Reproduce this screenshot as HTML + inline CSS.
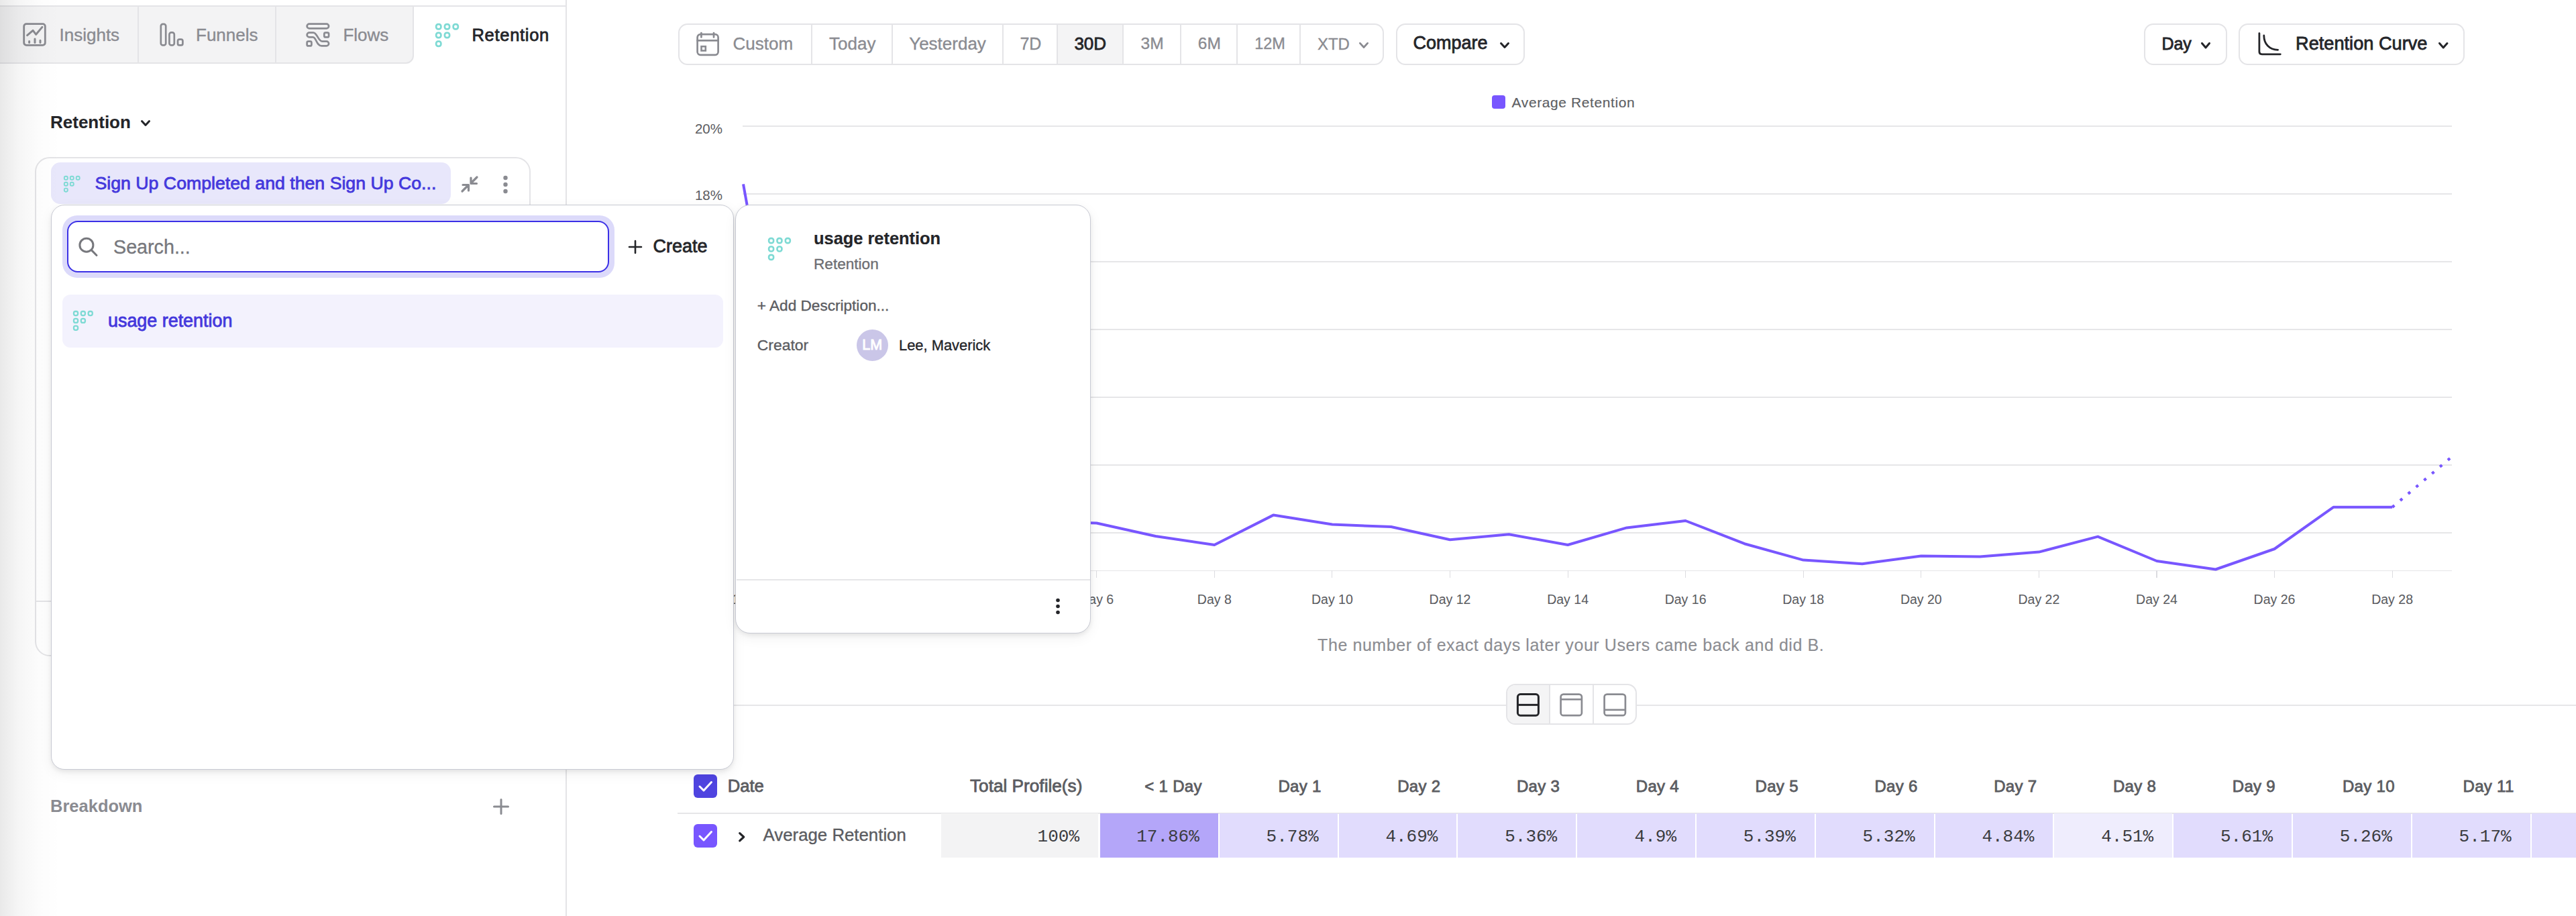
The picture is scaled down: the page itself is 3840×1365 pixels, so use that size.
<!DOCTYPE html>
<html><head><meta charset="utf-8"><style>
html,body{margin:0;padding:0;background:#fff;}
body{width:3840px;height:1365px;position:relative;overflow:hidden;font-family:"Liberation Sans",sans-serif;}
.t{position:absolute;white-space:nowrap;line-height:1;width:max-content;}
</style></head><body>
<div style="position:absolute;left:843.0px;top:0.0px;width:2.0px;height:1365.0px;background:#e4e4e7"></div>
<div style="position:absolute;left:0.0px;top:8.0px;width:843.0px;height:2.0px;background:#e4e4e7"></div>
<div style="position:absolute;left:-20.0px;top:8.0px;width:637.0px;height:87.0px;background:#f3f3f4;border:2px solid #e4e4e7;border-radius:0 0 12px 0;box-sizing:border-box"></div>
<div style="position:absolute;left:205.0px;top:10.0px;width:2.0px;height:84.0px;background:#e4e4e7"></div>
<div style="position:absolute;left:410.0px;top:10.0px;width:2.0px;height:84.0px;background:#e4e4e7"></div>
<svg style="position:absolute;left:34.0px;top:34.0px;overflow:visible" width="35" height="35" viewBox="0 0 35 35"><rect x="1.7" y="1.7" width="31.6" height="31.6" rx="3.5" fill="none" stroke="#8a8b91" stroke-width="2.8"/><path d="M6.6 18.6 L15.1 11.4 L19.7 17.3 L28.9 6.4" fill="none" stroke="#8a8b91" stroke-width="3" stroke-linecap="round" stroke-linejoin="round"/><path d="M9.6 27.5 V29.5 M18 24 V29.5 M26 26.3 V29.5" fill="none" stroke="#8a8b91" stroke-width="3" stroke-linecap="round"/></svg>
<div class="t" style="left:88.5px;top:39.0px;font-size:26.0px;color:#8a8b91;font-weight:400;font-family:'Liberation Sans', sans-serif;-webkit-text-stroke:0.35px #8a8b91;">Insights</div>
<svg style="position:absolute;left:238.0px;top:34.0px;overflow:visible" width="36" height="35" viewBox="0 0 36 35"><rect x="1.8" y="1.8" width="7.4" height="31.6" rx="3" fill="none" stroke="#8a8b91" stroke-width="2.7"/><rect x="14.4" y="14.4" width="7.4" height="19" rx="3" fill="none" stroke="#8a8b91" stroke-width="2.7"/><rect x="27" y="24.6" width="7.4" height="8.8" rx="2.5" fill="none" stroke="#8a8b91" stroke-width="2.7"/></svg>
<div class="t" style="left:292.0px;top:39.0px;font-size:26.0px;color:#8a8b91;font-weight:400;font-family:'Liberation Sans', sans-serif;-webkit-text-stroke:0.35px #8a8b91;">Funnels</div>
<svg style="position:absolute;left:456.0px;top:34.0px;overflow:visible" width="36" height="36" viewBox="0 0 36 36"><rect x="1.6" y="1.6" width="32.5" height="6.8" rx="3.4" fill="none" stroke="#8a8b91" stroke-width="2.7"/><rect x="27.3" y="14.6" width="6.8" height="6.8" rx="2" fill="none" stroke="#8a8b91" stroke-width="2.7"/><rect x="1.6" y="27.6" width="6.8" height="6.8" rx="2" fill="none" stroke="#8a8b91" stroke-width="2.7"/><path d="M5 14.6 H11 C17 14.6 18 27.6 24.5 27.6 H30.7 A3.4 3.4 0 0 1 30.7 34.4 H23.5 C15.5 34.4 15.5 21.4 10.5 21.4 H5 A3.4 3.4 0 0 1 5 14.6 Z" fill="none" stroke="#8a8b91" stroke-width="2.7" stroke-linejoin="round"/></svg>
<div class="t" style="left:511.4px;top:39.0px;font-size:26.0px;color:#8a8b91;font-weight:400;font-family:'Liberation Sans', sans-serif;-webkit-text-stroke:0.35px #8a8b91;">Flows</div>
<svg style="position:absolute;left:649.0px;top:35.0px;overflow:visible" width="35" height="35" viewBox="0 0 35 35"><rect x="1.15" y="1.15" width="7.2" height="7.2" rx="3" fill="none" stroke="#7edad4" stroke-width="2.7"/><rect x="13.90" y="1.15" width="7.2" height="7.2" rx="3" fill="none" stroke="#7edad4" stroke-width="2.7"/><rect x="26.65" y="1.15" width="7.2" height="7.2" rx="3" fill="none" stroke="#7edad4" stroke-width="2.7"/><rect x="1.15" y="13.90" width="7.2" height="7.2" rx="3" fill="none" stroke="#7edad4" stroke-width="2.7"/><rect x="13.90" y="13.90" width="7.2" height="7.2" rx="3" fill="none" stroke="#7edad4" stroke-width="2.7"/><rect x="1.15" y="26.65" width="7.2" height="7.2" rx="3" fill="none" stroke="#7edad4" stroke-width="2.7"/></svg>
<div class="t" style="left:703.5px;top:39.9px;font-size:25.5px;color:#242529;font-weight:400;font-family:'Liberation Sans', sans-serif;letter-spacing:0.7px;-webkit-text-stroke:0.80px #242529;">Retention</div>
<div class="t" style="left:75.0px;top:168.7px;font-size:26.0px;color:#242529;font-weight:700;font-family:'Liberation Sans', sans-serif;-webkit-text-stroke:0.10px #242529;">Retention</div>
<svg style="position:absolute;left:210.0px;top:179.0px;overflow:visible" width="14" height="9" viewBox="0 0 14 9"><path d="M1.5 1.5 L7.0 7.5 L12.5 1.5" fill="none" stroke="#242529" stroke-width="3" stroke-linecap="round" stroke-linejoin="round"/></svg>
<div style="position:absolute;left:52.0px;top:234.0px;width:739.0px;height:744.0px;border:2px solid #e4e4e7;border-radius:22px;box-sizing:border-box;background:#fff"></div>
<div style="position:absolute;left:54.0px;top:895.0px;width:735.0px;height:2.0px;background:#e4e4e7"></div>
<div style="position:absolute;left:76.0px;top:242.0px;width:596.0px;height:62.0px;background:#e8e7fb;border-radius:14px"></div>
<svg style="position:absolute;left:95.0px;top:262.0px;overflow:visible" width="24.5" height="24.5" viewBox="0 0 35 35"><rect x="1.15" y="1.15" width="7.2" height="7.2" rx="3" fill="none" stroke="#7edad4" stroke-width="2.7"/><rect x="13.90" y="1.15" width="7.2" height="7.2" rx="3" fill="none" stroke="#7edad4" stroke-width="2.7"/><rect x="26.65" y="1.15" width="7.2" height="7.2" rx="3" fill="none" stroke="#7edad4" stroke-width="2.7"/><rect x="1.15" y="13.90" width="7.2" height="7.2" rx="3" fill="none" stroke="#7edad4" stroke-width="2.7"/><rect x="13.90" y="13.90" width="7.2" height="7.2" rx="3" fill="none" stroke="#7edad4" stroke-width="2.7"/><rect x="1.15" y="26.65" width="7.2" height="7.2" rx="3" fill="none" stroke="#7edad4" stroke-width="2.7"/></svg>
<div class="t" style="left:141.5px;top:259.6px;font-size:26.7px;color:#4438dc;font-weight:400;font-family:'Liberation Sans', sans-serif;-webkit-text-stroke:0.80px #4438dc;">Sign Up Completed and then Sign Up Co...</div>
<svg style="position:absolute;left:686.0px;top:261.0px;overflow:visible" width="28" height="27" viewBox="0 0 28 27"><path d="M3 24 L11 16 M4 14.5 H12.5 V23 M25 3 L17 11 M16 4 V12.5 H24.5" fill="none" stroke="#8a8b91" stroke-width="3.2" stroke-linecap="round" stroke-linejoin="round"/></svg>
<svg style="position:absolute;left:749.0px;top:261.0px;overflow:visible" width="9" height="28" viewBox="0 0 9 28"><circle cx="4.5" cy="4" r="3.2" fill="#8a8b91"/><circle cx="4.5" cy="14" r="3.2" fill="#8a8b91"/><circle cx="4.5" cy="24" r="3.2" fill="#8a8b91"/></svg>
<div class="t" style="left:75.0px;top:1189.4px;font-size:25.5px;color:#8a8b91;font-weight:700;font-family:'Liberation Sans', sans-serif;">Breakdown</div>
<svg style="position:absolute;left:735.0px;top:1190.0px;overflow:visible" width="24" height="24" viewBox="0 0 24 24"><path d="M12 1.5 V22.5 M1.5 12 H22.5" stroke="#8a8b91" stroke-width="3" stroke-linecap="round"/></svg>
<div style="position:absolute;left:1011.0px;top:34.5px;width:1052.0px;height:62.0px;border:2px solid #e4e4e7;border-radius:14px;box-sizing:border-box;background:#fff;overflow:hidden"></div>
<div style="position:absolute;left:1576.0px;top:36.5px;width:98.0px;height:58.0px;background:#f4f4f5"></div>
<div style="position:absolute;left:1209.0px;top:34.5px;width:2.0px;height:62.0px;background:#e4e4e7"></div>
<div style="position:absolute;left:1329.0px;top:34.5px;width:2.0px;height:62.0px;background:#e4e4e7"></div>
<div style="position:absolute;left:1494.0px;top:34.5px;width:2.0px;height:62.0px;background:#e4e4e7"></div>
<div style="position:absolute;left:1575.0px;top:34.5px;width:2.0px;height:62.0px;background:#e4e4e7"></div>
<div style="position:absolute;left:1673.0px;top:34.5px;width:2.0px;height:62.0px;background:#e4e4e7"></div>
<div style="position:absolute;left:1759.0px;top:34.5px;width:2.0px;height:62.0px;background:#e4e4e7"></div>
<div style="position:absolute;left:1843.0px;top:34.5px;width:2.0px;height:62.0px;background:#e4e4e7"></div>
<div style="position:absolute;left:1937.0px;top:34.5px;width:2.0px;height:62.0px;background:#e4e4e7"></div>
<svg style="position:absolute;left:1037.0px;top:47.5px;overflow:visible" width="36" height="36" viewBox="0 0 36 36"><rect x="2.6" y="3.2" width="31" height="30.6" rx="4.5" fill="none" stroke="#8a8b91" stroke-width="2.7"/><path d="M2.6 12.4 H33.6 M8.4 1 V7.5 M27 1 V7.5" stroke="#8a8b91" stroke-width="2.7" stroke-linecap="round"/><rect x="8.5" y="21.2" width="6.3" height="6.3" fill="none" stroke="#8a8b91" stroke-width="2.6"/></svg>
<div class="t" style="left:1092.6px;top:52.0px;font-size:26.0px;color:#8a8b91;font-weight:400;font-family:'Liberation Sans', sans-serif;-webkit-text-stroke:0.35px #8a8b91;">Custom</div>
<div class="t" style="left:1236.0px;top:52.0px;font-size:26.0px;color:#8a8b91;font-weight:400;font-family:'Liberation Sans', sans-serif;-webkit-text-stroke:0.35px #8a8b91;">Today</div>
<div class="t" style="left:1355.2px;top:52.0px;font-size:26.0px;color:#8a8b91;font-weight:400;font-family:'Liberation Sans', sans-serif;-webkit-text-stroke:0.35px #8a8b91;">Yesterday</div>
<div class="t" style="left:1520.4px;top:52.8px;font-size:25.0px;color:#8a8b91;font-weight:400;font-family:'Liberation Sans', sans-serif;-webkit-text-stroke:0.35px #8a8b91;">7D</div>
<div class="t" style="left:1601.4px;top:52.0px;font-size:26.0px;color:#242529;font-weight:400;font-family:'Liberation Sans', sans-serif;-webkit-text-stroke:0.80px #242529;">30D</div>
<div class="t" style="left:1700.6px;top:53.3px;font-size:24.5px;color:#8a8b91;font-weight:400;font-family:'Liberation Sans', sans-serif;-webkit-text-stroke:0.35px #8a8b91;">3M</div>
<div class="t" style="left:1785.8px;top:53.3px;font-size:24.5px;color:#8a8b91;font-weight:400;font-family:'Liberation Sans', sans-serif;-webkit-text-stroke:0.35px #8a8b91;">6M</div>
<div class="t" style="left:1870.2px;top:54.1px;font-size:23.5px;color:#8a8b91;font-weight:400;font-family:'Liberation Sans', sans-serif;-webkit-text-stroke:0.35px #8a8b91;">12M</div>
<div class="t" style="left:1963.9px;top:53.7px;font-size:24.0px;color:#8a8b91;font-weight:400;font-family:'Liberation Sans', sans-serif;-webkit-text-stroke:0.35px #8a8b91;">XTD</div>
<svg style="position:absolute;left:2026.0px;top:62.5px;overflow:visible" width="14" height="9" viewBox="0 0 14 9"><path d="M1.4 1.4 L7.0 7.6 L12.6 1.4" fill="none" stroke="#8a8b91" stroke-width="2.8" stroke-linecap="round" stroke-linejoin="round"/></svg>
<div style="position:absolute;left:2081.0px;top:34.5px;width:192.0px;height:62.0px;border:2px solid #e4e4e7;border-radius:14px;box-sizing:border-box;background:#fff"></div>
<div class="t" style="left:2106.4px;top:51.1px;font-size:27.0px;color:#242529;font-weight:400;font-family:'Liberation Sans', sans-serif;-webkit-text-stroke:0.80px #242529;">Compare</div>
<svg style="position:absolute;left:2236.0px;top:62.5px;overflow:visible" width="14" height="9" viewBox="0 0 14 9"><path d="M1.5 1.5 L7.0 7.5 L12.5 1.5" fill="none" stroke="#242529" stroke-width="3" stroke-linecap="round" stroke-linejoin="round"/></svg>
<div style="position:absolute;left:3196.0px;top:34.5px;width:124.0px;height:62.0px;border:2px solid #e4e4e7;border-radius:14px;box-sizing:border-box;background:#fff"></div>
<div class="t" style="left:3222.4px;top:52.8px;font-size:25.0px;color:#242529;font-weight:400;font-family:'Liberation Sans', sans-serif;-webkit-text-stroke:0.80px #242529;">Day</div>
<svg style="position:absolute;left:3280.5px;top:62.5px;overflow:visible" width="14" height="9.5" viewBox="0 0 14 9.5"><path d="M1.5 1.5 L7.0 8.0 L12.5 1.5" fill="none" stroke="#242529" stroke-width="3" stroke-linecap="round" stroke-linejoin="round"/></svg>
<div style="position:absolute;left:3337.0px;top:34.5px;width:337.0px;height:62.0px;border:2px solid #e4e4e7;border-radius:14px;box-sizing:border-box;background:#fff"></div>
<svg style="position:absolute;left:3366.0px;top:48.0px;overflow:visible" width="35" height="35" viewBox="0 0 35 35"><path d="M1.9 1.6 V29 Q1.9 32.8 5.7 32.8 H33.3" fill="none" stroke="#242529" stroke-width="2.8" stroke-linecap="round"/><path d="M8.8 5 C8.8 17.5 17 26.2 29.6 26.3" fill="none" stroke="#242529" stroke-width="2.8" stroke-linecap="round"/></svg>
<div class="t" style="left:3422.0px;top:51.0px;font-size:27.2px;color:#242529;font-weight:400;font-family:'Liberation Sans', sans-serif;-webkit-text-stroke:0.80px #242529;">Retention Curve</div>
<svg style="position:absolute;left:3634.5px;top:62.5px;overflow:visible" width="14.5" height="9.5" viewBox="0 0 14.5 9.5"><path d="M1.5 1.5 L7.2 8.0 L13.0 1.5" fill="none" stroke="#242529" stroke-width="3" stroke-linecap="round" stroke-linejoin="round"/></svg>
<div style="position:absolute;left:2224.0px;top:142.0px;width:19.5px;height:19.5px;background:#7856ff;border-radius:4px"></div>
<div class="t" style="left:2253.6px;top:141.6px;font-size:21.0px;color:#5d5e63;font-weight:400;font-family:'Liberation Sans', sans-serif;letter-spacing:0.6px;-webkit-text-stroke:0.15px #5d5e63;">Average Retention</div>
<div style="position:absolute;left:1107.0px;top:187.0px;width:2548.0px;height:1.8px;background:#e6e6e8"></div>
<div style="position:absolute;left:1107.0px;top:288.0px;width:2548.0px;height:1.8px;background:#e6e6e8"></div>
<div style="position:absolute;left:1107.0px;top:389.0px;width:2548.0px;height:1.8px;background:#e6e6e8"></div>
<div style="position:absolute;left:1107.0px;top:490.0px;width:2548.0px;height:1.8px;background:#e6e6e8"></div>
<div style="position:absolute;left:1107.0px;top:591.0px;width:2548.0px;height:1.8px;background:#e6e6e8"></div>
<div style="position:absolute;left:1107.0px;top:692.0px;width:2548.0px;height:1.8px;background:#e6e6e8"></div>
<div style="position:absolute;left:1107.0px;top:793.0px;width:2548.0px;height:1.8px;background:#e6e6e8"></div>
<div style="position:absolute;left:1107.0px;top:849.7px;width:2548.0px;height:1.8px;background:#e6e6e8"></div>
<div style="position:absolute;left:1107.4px;top:850.0px;width:1.2px;height:11.0px;background:#dcdce0"></div>
<div style="position:absolute;left:1283.0px;top:850.0px;width:1.2px;height:11.0px;background:#dcdce0"></div>
<div style="position:absolute;left:1458.6px;top:850.0px;width:1.2px;height:11.0px;background:#dcdce0"></div>
<div style="position:absolute;left:1634.1px;top:850.0px;width:1.2px;height:11.0px;background:#dcdce0"></div>
<div style="position:absolute;left:1809.7px;top:850.0px;width:1.2px;height:11.0px;background:#dcdce0"></div>
<div style="position:absolute;left:1985.3px;top:850.0px;width:1.2px;height:11.0px;background:#dcdce0"></div>
<div style="position:absolute;left:2160.9px;top:850.0px;width:1.2px;height:11.0px;background:#dcdce0"></div>
<div style="position:absolute;left:2336.5px;top:850.0px;width:1.2px;height:11.0px;background:#dcdce0"></div>
<div style="position:absolute;left:2512.0px;top:850.0px;width:1.2px;height:11.0px;background:#dcdce0"></div>
<div style="position:absolute;left:2687.6px;top:850.0px;width:1.2px;height:11.0px;background:#dcdce0"></div>
<div style="position:absolute;left:2863.2px;top:850.0px;width:1.2px;height:11.0px;background:#dcdce0"></div>
<div style="position:absolute;left:3038.8px;top:850.0px;width:1.2px;height:11.0px;background:#dcdce0"></div>
<div style="position:absolute;left:3214.4px;top:850.0px;width:1.2px;height:11.0px;background:#dcdce0"></div>
<div style="position:absolute;left:3389.9px;top:850.0px;width:1.2px;height:11.0px;background:#dcdce0"></div>
<div style="position:absolute;left:3565.5px;top:850.0px;width:1.2px;height:11.0px;background:#dcdce0"></div>
<div class="t" style="left:1077.0px;top:181.6px;font-size:20.5px;color:#5b5c61;font-weight:400;font-family:'Liberation Sans', sans-serif;transform:translateX(-100%);">20%</div>
<div class="t" style="left:1077.0px;top:281.3px;font-size:20.5px;color:#5b5c61;font-weight:400;font-family:'Liberation Sans', sans-serif;transform:translateX(-100%);">18%</div>
<div class="t" style="left:1108.0px;top:884.3px;font-size:19.5px;color:#5b5c61;font-weight:400;font-family:'Liberation Sans', sans-serif;transform:translateX(-50%);-webkit-text-stroke:0.05px #5b5c61;">< 1 Day</div>
<div class="t" style="left:1283.6px;top:884.3px;font-size:19.5px;color:#5b5c61;font-weight:400;font-family:'Liberation Sans', sans-serif;transform:translateX(-50%);-webkit-text-stroke:0.05px #5b5c61;">Day 2</div>
<div class="t" style="left:1459.2px;top:884.3px;font-size:19.5px;color:#5b5c61;font-weight:400;font-family:'Liberation Sans', sans-serif;transform:translateX(-50%);-webkit-text-stroke:0.05px #5b5c61;">Day 4</div>
<div class="t" style="left:1634.7px;top:884.3px;font-size:19.5px;color:#5b5c61;font-weight:400;font-family:'Liberation Sans', sans-serif;transform:translateX(-50%);-webkit-text-stroke:0.05px #5b5c61;">Day 6</div>
<div class="t" style="left:1810.3px;top:884.3px;font-size:19.5px;color:#5b5c61;font-weight:400;font-family:'Liberation Sans', sans-serif;transform:translateX(-50%);-webkit-text-stroke:0.05px #5b5c61;">Day 8</div>
<div class="t" style="left:1985.9px;top:884.3px;font-size:19.5px;color:#5b5c61;font-weight:400;font-family:'Liberation Sans', sans-serif;transform:translateX(-50%);-webkit-text-stroke:0.05px #5b5c61;">Day 10</div>
<div class="t" style="left:2161.5px;top:884.3px;font-size:19.5px;color:#5b5c61;font-weight:400;font-family:'Liberation Sans', sans-serif;transform:translateX(-50%);-webkit-text-stroke:0.05px #5b5c61;">Day 12</div>
<div class="t" style="left:2337.1px;top:884.3px;font-size:19.5px;color:#5b5c61;font-weight:400;font-family:'Liberation Sans', sans-serif;transform:translateX(-50%);-webkit-text-stroke:0.05px #5b5c61;">Day 14</div>
<div class="t" style="left:2512.6px;top:884.3px;font-size:19.5px;color:#5b5c61;font-weight:400;font-family:'Liberation Sans', sans-serif;transform:translateX(-50%);-webkit-text-stroke:0.05px #5b5c61;">Day 16</div>
<div class="t" style="left:2688.2px;top:884.3px;font-size:19.5px;color:#5b5c61;font-weight:400;font-family:'Liberation Sans', sans-serif;transform:translateX(-50%);-webkit-text-stroke:0.05px #5b5c61;">Day 18</div>
<div class="t" style="left:2863.8px;top:884.3px;font-size:19.5px;color:#5b5c61;font-weight:400;font-family:'Liberation Sans', sans-serif;transform:translateX(-50%);-webkit-text-stroke:0.05px #5b5c61;">Day 20</div>
<div class="t" style="left:3039.4px;top:884.3px;font-size:19.5px;color:#5b5c61;font-weight:400;font-family:'Liberation Sans', sans-serif;transform:translateX(-50%);-webkit-text-stroke:0.05px #5b5c61;">Day 22</div>
<div class="t" style="left:3215.0px;top:884.3px;font-size:19.5px;color:#5b5c61;font-weight:400;font-family:'Liberation Sans', sans-serif;transform:translateX(-50%);-webkit-text-stroke:0.05px #5b5c61;">Day 24</div>
<div class="t" style="left:3390.5px;top:884.3px;font-size:19.5px;color:#5b5c61;font-weight:400;font-family:'Liberation Sans', sans-serif;transform:translateX(-50%);-webkit-text-stroke:0.05px #5b5c61;">Day 26</div>
<div class="t" style="left:3566.1px;top:884.3px;font-size:19.5px;color:#5b5c61;font-weight:400;font-family:'Liberation Sans', sans-serif;transform:translateX(-50%);-webkit-text-stroke:0.05px #5b5c61;">Day 28</div>
<svg style="position:absolute;left:0.0px;top:0.0px;overflow:visible" width="3840" height="1365" viewBox="0 0 3840 1365"><polyline points="1108.0,274.3 1195.8,761.4 1283.6,805.3 1371.4,778.3 1459.2,796.8 1547.0,777.1 1634.7,779.5 1722.5,799.0 1810.3,812.0 1898.1,767.6 1985.9,781.6 2073.7,785.0 2161.5,804.3 2249.3,796.2 2337.1,812.0 2424.9,786.4 2512.6,776.0 2600.4,810.2 2688.2,834.6 2776.0,840.2 2863.8,828.4 2951.6,829.4 3039.4,822.6 3127.2,799.6 3215.0,836.0 3302.8,848.5 3390.5,818.0 3478.3,755.8 3566.1,755.8" fill="none" stroke="#7856ff" stroke-width="4" stroke-linejoin="round"/><line x1="3566.1" y1="755.8" x2="3653.9" y2="681.5" stroke="#7856ff" stroke-width="4.2" stroke-dasharray="4.2 11.3"/></svg>
<div class="t" style="left:2341.7px;top:948.6px;font-size:25.0px;color:#8c8d92;font-weight:400;font-family:'Liberation Sans', sans-serif;transform:translateX(-50%);letter-spacing:0.57px;-webkit-text-stroke:0.15px #8c8d92;">The number of exact days later your Users came back and did B.</div>
<div style="position:absolute;left:845.0px;top:1050.0px;width:2995.0px;height:2.0px;background:#e6e6e8"></div>
<div style="position:absolute;left:2245.0px;top:1019.2px;width:195.0px;height:61.2px;border:2px solid #e4e4e7;border-radius:14px;box-sizing:border-box;background:#fff;overflow:hidden"></div>
<div style="position:absolute;left:2247.0px;top:1021.2px;width:63.0px;height:57.2px;background:#f4f4f5;border-radius:12px 0 0 12px"></div>
<div style="position:absolute;left:2309.0px;top:1019.2px;width:2.0px;height:61.2px;background:#e4e4e7"></div>
<div style="position:absolute;left:2373.5px;top:1019.2px;width:2.0px;height:61.2px;background:#e4e4e7"></div>
<svg style="position:absolute;left:2260.0px;top:1033.0px;overflow:visible" width="36" height="35" viewBox="0 0 36 35"><rect x="2.4" y="1.6" width="31" height="31.6" rx="4" fill="none" stroke="#242529" stroke-width="3"/><path d="M2.4 17.4 H33.4" stroke="#242529" stroke-width="3"/></svg>
<svg style="position:absolute;left:2325.0px;top:1033.0px;overflow:visible" width="35" height="35" viewBox="0 0 35 35"><rect x="1.6" y="1.6" width="31.3" height="31.6" rx="4" fill="none" stroke="#8a8b91" stroke-width="2.7"/><path d="M1.6 9.2 H32.9" stroke="#8a8b91" stroke-width="2.7"/></svg>
<svg style="position:absolute;left:2390.0px;top:1033.0px;overflow:visible" width="35" height="35" viewBox="0 0 35 35"><rect x="1.6" y="1.6" width="31.3" height="31.6" rx="4" fill="none" stroke="#8a8b91" stroke-width="2.7"/><path d="M1.6 24.8 H32.9" stroke="#8a8b91" stroke-width="2.7"/></svg>
<div style="position:absolute;left:1010.0px;top:1211.0px;width:2830.0px;height:2.0px;background:#e6e6e8"></div>
<div style="position:absolute;left:1033.5px;top:1153.5px;width:35.0px;height:35.0px;background:#4f44e0;border-radius:6px"></div>
<svg style="position:absolute;left:1033.5px;top:1153.5px;overflow:visible" width="35" height="35" viewBox="0 0 35 35"><path d="M9 18 L15 24 L26.5 11.5" fill="none" stroke="#fff" stroke-width="3" stroke-linecap="round" stroke-linejoin="round"/></svg>
<div class="t" style="left:1084.8px;top:1158.6px;font-size:25.6px;color:#5b5c61;font-weight:400;font-family:'Liberation Sans', sans-serif;-webkit-text-stroke:0.80px #5b5c61;">Date</div>
<div class="t" style="left:1613.4px;top:1158.1px;font-size:26.2px;color:#5b5c61;font-weight:400;font-family:'Liberation Sans', sans-serif;transform:translateX(-100%);-webkit-text-stroke:0.80px #5b5c61;">Total Profile(s)</div>
<div style="position:absolute;left:1403.0px;top:1212.0px;width:234.0px;height:66.0px;background:#f3f3f4"></div>
<div class="t" style="left:1609.0px;top:1233.6px;font-size:26.0px;color:#3b3c40;font-weight:400;font-family:'Liberation Mono', monospace;transform:translateX(-100%);">100%</div>
<div style="position:absolute;left:1033.5px;top:1228.0px;width:35.0px;height:35.0px;background:#7856ff;border-radius:6px"></div>
<svg style="position:absolute;left:1033.5px;top:1228.0px;overflow:visible" width="35" height="35" viewBox="0 0 35 35"><path d="M9 18 L15 24 L26.5 11.5" fill="none" stroke="#fff" stroke-width="3" stroke-linecap="round" stroke-linejoin="round"/></svg>
<svg style="position:absolute;left:1101.0px;top:1239.5px;overflow:visible" width="9.5" height="14.5" viewBox="0 0 9.5 14.5"><path d="M1.7 1.7 L7.7 7.25 L1.7 12.8" fill="none" stroke="#242529" stroke-width="3.2" stroke-linecap="round" stroke-linejoin="round"/></svg>
<div class="t" style="left:1137.6px;top:1232.4px;font-size:25.8px;color:#5b5c61;font-weight:400;font-family:'Liberation Sans', sans-serif;-webkit-text-stroke:0.35px #5b5c61;">Average Retention</div>
<div style="position:absolute;left:1640.0px;top:1212.0px;width:175.8px;height:66.0px;background:#b4a6f9"></div>
<div class="t" style="left:1791.8px;top:1160.0px;font-size:24.0px;color:#5b5c61;font-weight:400;font-family:'Liberation Sans', sans-serif;transform:translateX(-100%);letter-spacing:0.3px;-webkit-text-stroke:0.80px #5b5c61;">< 1 Day</div>
<div class="t" style="left:1787.8px;top:1233.6px;font-size:26.0px;color:#3b3c40;font-weight:400;font-family:'Liberation Mono', monospace;transform:translateX(-100%);">17.86%</div>
<div style="position:absolute;left:1817.8px;top:1212.0px;width:175.8px;height:66.0px;background:#e1dcfd"></div>
<div class="t" style="left:1969.6px;top:1160.0px;font-size:24.0px;color:#5b5c61;font-weight:400;font-family:'Liberation Sans', sans-serif;transform:translateX(-100%);letter-spacing:0.3px;-webkit-text-stroke:0.80px #5b5c61;">Day 1</div>
<div class="t" style="left:1965.6px;top:1233.6px;font-size:26.0px;color:#3b3c40;font-weight:400;font-family:'Liberation Mono', monospace;transform:translateX(-100%);">5.78%</div>
<div style="position:absolute;left:1995.6px;top:1212.0px;width:175.8px;height:66.0px;background:#e1dcfd"></div>
<div class="t" style="left:2147.4px;top:1160.0px;font-size:24.0px;color:#5b5c61;font-weight:400;font-family:'Liberation Sans', sans-serif;transform:translateX(-100%);letter-spacing:0.3px;-webkit-text-stroke:0.80px #5b5c61;">Day 2</div>
<div class="t" style="left:2143.4px;top:1233.6px;font-size:26.0px;color:#3b3c40;font-weight:400;font-family:'Liberation Mono', monospace;transform:translateX(-100%);">4.69%</div>
<div style="position:absolute;left:2173.4px;top:1212.0px;width:175.8px;height:66.0px;background:#e1dcfd"></div>
<div class="t" style="left:2325.2px;top:1160.0px;font-size:24.0px;color:#5b5c61;font-weight:400;font-family:'Liberation Sans', sans-serif;transform:translateX(-100%);letter-spacing:0.3px;-webkit-text-stroke:0.80px #5b5c61;">Day 3</div>
<div class="t" style="left:2321.2px;top:1233.6px;font-size:26.0px;color:#3b3c40;font-weight:400;font-family:'Liberation Mono', monospace;transform:translateX(-100%);">5.36%</div>
<div style="position:absolute;left:2351.2px;top:1212.0px;width:175.8px;height:66.0px;background:#e1dcfd"></div>
<div class="t" style="left:2503.0px;top:1160.0px;font-size:24.0px;color:#5b5c61;font-weight:400;font-family:'Liberation Sans', sans-serif;transform:translateX(-100%);letter-spacing:0.3px;-webkit-text-stroke:0.80px #5b5c61;">Day 4</div>
<div class="t" style="left:2499.0px;top:1233.6px;font-size:26.0px;color:#3b3c40;font-weight:400;font-family:'Liberation Mono', monospace;transform:translateX(-100%);">4.9%</div>
<div style="position:absolute;left:2529.0px;top:1212.0px;width:175.8px;height:66.0px;background:#e1dcfd"></div>
<div class="t" style="left:2680.8px;top:1160.0px;font-size:24.0px;color:#5b5c61;font-weight:400;font-family:'Liberation Sans', sans-serif;transform:translateX(-100%);letter-spacing:0.3px;-webkit-text-stroke:0.80px #5b5c61;">Day 5</div>
<div class="t" style="left:2676.8px;top:1233.6px;font-size:26.0px;color:#3b3c40;font-weight:400;font-family:'Liberation Mono', monospace;transform:translateX(-100%);">5.39%</div>
<div style="position:absolute;left:2706.8px;top:1212.0px;width:175.8px;height:66.0px;background:#e1dcfd"></div>
<div class="t" style="left:2858.6px;top:1160.0px;font-size:24.0px;color:#5b5c61;font-weight:400;font-family:'Liberation Sans', sans-serif;transform:translateX(-100%);letter-spacing:0.3px;-webkit-text-stroke:0.80px #5b5c61;">Day 6</div>
<div class="t" style="left:2854.6px;top:1233.6px;font-size:26.0px;color:#3b3c40;font-weight:400;font-family:'Liberation Mono', monospace;transform:translateX(-100%);">5.32%</div>
<div style="position:absolute;left:2884.6px;top:1212.0px;width:175.8px;height:66.0px;background:#e1dcfd"></div>
<div class="t" style="left:3036.4px;top:1160.0px;font-size:24.0px;color:#5b5c61;font-weight:400;font-family:'Liberation Sans', sans-serif;transform:translateX(-100%);letter-spacing:0.3px;-webkit-text-stroke:0.80px #5b5c61;">Day 7</div>
<div class="t" style="left:3032.4px;top:1233.6px;font-size:26.0px;color:#3b3c40;font-weight:400;font-family:'Liberation Mono', monospace;transform:translateX(-100%);">4.84%</div>
<div style="position:absolute;left:3062.4px;top:1212.0px;width:175.8px;height:66.0px;background:#efedfd"></div>
<div class="t" style="left:3214.2px;top:1160.0px;font-size:24.0px;color:#5b5c61;font-weight:400;font-family:'Liberation Sans', sans-serif;transform:translateX(-100%);letter-spacing:0.3px;-webkit-text-stroke:0.80px #5b5c61;">Day 8</div>
<div class="t" style="left:3210.2px;top:1233.6px;font-size:26.0px;color:#3b3c40;font-weight:400;font-family:'Liberation Mono', monospace;transform:translateX(-100%);">4.51%</div>
<div style="position:absolute;left:3240.2px;top:1212.0px;width:175.8px;height:66.0px;background:#e1dcfd"></div>
<div class="t" style="left:3392.0px;top:1160.0px;font-size:24.0px;color:#5b5c61;font-weight:400;font-family:'Liberation Sans', sans-serif;transform:translateX(-100%);letter-spacing:0.3px;-webkit-text-stroke:0.80px #5b5c61;">Day 9</div>
<div class="t" style="left:3388.0px;top:1233.6px;font-size:26.0px;color:#3b3c40;font-weight:400;font-family:'Liberation Mono', monospace;transform:translateX(-100%);">5.61%</div>
<div style="position:absolute;left:3418.0px;top:1212.0px;width:175.8px;height:66.0px;background:#e1dcfd"></div>
<div class="t" style="left:3569.8px;top:1160.0px;font-size:24.0px;color:#5b5c61;font-weight:400;font-family:'Liberation Sans', sans-serif;transform:translateX(-100%);letter-spacing:0.3px;-webkit-text-stroke:0.80px #5b5c61;">Day 10</div>
<div class="t" style="left:3565.8px;top:1233.6px;font-size:26.0px;color:#3b3c40;font-weight:400;font-family:'Liberation Mono', monospace;transform:translateX(-100%);">5.26%</div>
<div style="position:absolute;left:3595.8px;top:1212.0px;width:175.8px;height:66.0px;background:#e1dcfd"></div>
<div class="t" style="left:3747.6px;top:1160.0px;font-size:24.0px;color:#5b5c61;font-weight:400;font-family:'Liberation Sans', sans-serif;transform:translateX(-100%);letter-spacing:0.3px;-webkit-text-stroke:0.80px #5b5c61;">Day 11</div>
<div class="t" style="left:3743.6px;top:1233.6px;font-size:26.0px;color:#3b3c40;font-weight:400;font-family:'Liberation Mono', monospace;transform:translateX(-100%);">5.17%</div>
<div style="position:absolute;left:3773.6px;top:1212.0px;width:175.8px;height:66.0px;background:#e1dcfd"></div>
<div class="t" style="left:3925.4px;top:1160.0px;font-size:24.0px;color:#5b5c61;font-weight:400;font-family:'Liberation Sans', sans-serif;transform:translateX(-100%);letter-spacing:0.3px;-webkit-text-stroke:0.80px #5b5c61;">Day 12</div>
<div style="position:absolute;left:0.0px;top:0.0px;width:90.0px;height:1365.0px;background:linear-gradient(to right, rgba(0,0,0,0.085), rgba(0,0,0,0.04) 30%, rgba(0,0,0,0.012) 65%, rgba(0,0,0,0) 100%)"></div>
<div style="position:absolute;left:76.0px;top:305.0px;width:1018.0px;height:842.0px;background:#fff;border:1.5px solid #c8cad3;border-radius:20px;box-sizing:border-box;box-shadow:0 3px 6px rgba(0,0,0,0.07), 0 6px 20px rgba(0,0,0,0.06)"></div>
<div style="position:absolute;left:92.5px;top:321.0px;width:823.0px;height:93.0px;background:#dcdafa;border-radius:22px"></div>
<div style="position:absolute;left:100.0px;top:329.0px;width:807.5px;height:77.0px;background:#fff;border:2px solid #3b30e6;border-radius:16px;box-sizing:border-box"></div>
<svg style="position:absolute;left:115.0px;top:352.0px;overflow:visible" width="32" height="32" viewBox="0 0 32 32"><circle cx="13.9" cy="13.2" r="10" fill="none" stroke="#77787d" stroke-width="3"/><path d="M21.3 20.6 L29 28.5" stroke="#77787d" stroke-width="3" stroke-linecap="round"/></svg>
<div class="t" style="left:169.0px;top:354.4px;font-size:28.7px;color:#77787d;font-weight:400;font-family:'Liberation Sans', sans-serif;-webkit-text-stroke:0.35px #77787d;">Search...</div>
<svg style="position:absolute;left:937.0px;top:358.0px;overflow:visible" width="20" height="20" viewBox="0 0 20 20"><path d="M10 1 V19 M1 10 H19" stroke="#242529" stroke-width="2.6" stroke-linecap="round"/></svg>
<div class="t" style="left:973.4px;top:353.7px;font-size:27.0px;color:#242529;font-weight:400;font-family:'Liberation Sans', sans-serif;-webkit-text-stroke:0.80px #242529;">Create</div>
<div style="position:absolute;left:92.5px;top:438.5px;width:985.0px;height:79.5px;background:#f3f2fd;border-radius:12px"></div>
<svg style="position:absolute;left:108.5px;top:463.3px;overflow:visible" width="29.75" height="29.75" viewBox="0 0 35 35"><rect x="1.15" y="1.15" width="7.2" height="7.2" rx="3" fill="none" stroke="#7edad4" stroke-width="2.7"/><rect x="13.90" y="1.15" width="7.2" height="7.2" rx="3" fill="none" stroke="#7edad4" stroke-width="2.7"/><rect x="26.65" y="1.15" width="7.2" height="7.2" rx="3" fill="none" stroke="#7edad4" stroke-width="2.7"/><rect x="1.15" y="13.90" width="7.2" height="7.2" rx="3" fill="none" stroke="#7edad4" stroke-width="2.7"/><rect x="13.90" y="13.90" width="7.2" height="7.2" rx="3" fill="none" stroke="#7edad4" stroke-width="2.7"/><rect x="1.15" y="26.65" width="7.2" height="7.2" rx="3" fill="none" stroke="#7edad4" stroke-width="2.7"/></svg>
<div class="t" style="left:161.0px;top:465.1px;font-size:26.9px;color:#4438dc;font-weight:400;font-family:'Liberation Sans', sans-serif;-webkit-text-stroke:0.80px #4438dc;">usage retention</div>
<div style="position:absolute;left:1096.0px;top:305.0px;width:530.0px;height:639.0px;background:#fff;border:1.5px solid #c8cad3;border-radius:22px;box-sizing:border-box;box-shadow:0 3px 6px rgba(0,0,0,0.07), 0 6px 20px rgba(0,0,0,0.06)"></div>
<svg style="position:absolute;left:1145.0px;top:353.5px;overflow:visible" width="33.95" height="33.95" viewBox="0 0 35 35"><rect x="1.15" y="1.15" width="7.2" height="7.2" rx="3" fill="none" stroke="#7edad4" stroke-width="2.7"/><rect x="13.90" y="1.15" width="7.2" height="7.2" rx="3" fill="none" stroke="#7edad4" stroke-width="2.7"/><rect x="26.65" y="1.15" width="7.2" height="7.2" rx="3" fill="none" stroke="#7edad4" stroke-width="2.7"/><rect x="1.15" y="13.90" width="7.2" height="7.2" rx="3" fill="none" stroke="#7edad4" stroke-width="2.7"/><rect x="13.90" y="13.90" width="7.2" height="7.2" rx="3" fill="none" stroke="#7edad4" stroke-width="2.7"/><rect x="1.15" y="26.65" width="7.2" height="7.2" rx="3" fill="none" stroke="#7edad4" stroke-width="2.7"/></svg>
<div class="t" style="left:1213.0px;top:343.3px;font-size:25.4px;color:#242529;font-weight:700;font-family:'Liberation Sans', sans-serif;-webkit-text-stroke:0.20px #242529;">usage retention</div>
<div class="t" style="left:1213.0px;top:382.8px;font-size:22.6px;color:#6d6e73;font-weight:400;font-family:'Liberation Sans', sans-serif;-webkit-text-stroke:0.35px #6d6e73;">Retention</div>
<div class="t" style="left:1128.8px;top:444.6px;font-size:22.6px;color:#5b5c61;font-weight:400;font-family:'Liberation Sans', sans-serif;-webkit-text-stroke:0.35px #5b5c61;">+ Add Description...</div>
<div class="t" style="left:1128.8px;top:502.6px;font-size:22.9px;color:#5b5c61;font-weight:400;font-family:'Liberation Sans', sans-serif;-webkit-text-stroke:0.35px #5b5c61;">Creator</div>
<div style="position:absolute;left:1277.0px;top:490.8px;width:47.0px;height:47.0px;background:#cac6e8;border-radius:50%"></div>
<div class="t" style="left:1300.3px;top:504.1px;font-size:21.5px;color:#fff;font-weight:400;font-family:'Liberation Sans', sans-serif;transform:translateX(-50%);-webkit-text-stroke:0.90px #fff;">LM</div>
<div class="t" style="left:1340.0px;top:503.5px;font-size:21.9px;color:#242529;font-weight:400;font-family:'Liberation Sans', sans-serif;-webkit-text-stroke:0.35px #242529;">Lee, Maverick</div>
<div style="position:absolute;left:1097.5px;top:862.5px;width:527.0px;height:2.0px;background:#e6e6e8"></div>
<svg style="position:absolute;left:1573.0px;top:891.0px;overflow:visible" width="8" height="26" viewBox="0 0 8 26"><circle cx="4" cy="3.5" r="2.8" fill="#242529"/><circle cx="4" cy="12.5" r="2.8" fill="#242529"/><circle cx="4" cy="21.5" r="2.8" fill="#242529"/></svg>
</body></html>
